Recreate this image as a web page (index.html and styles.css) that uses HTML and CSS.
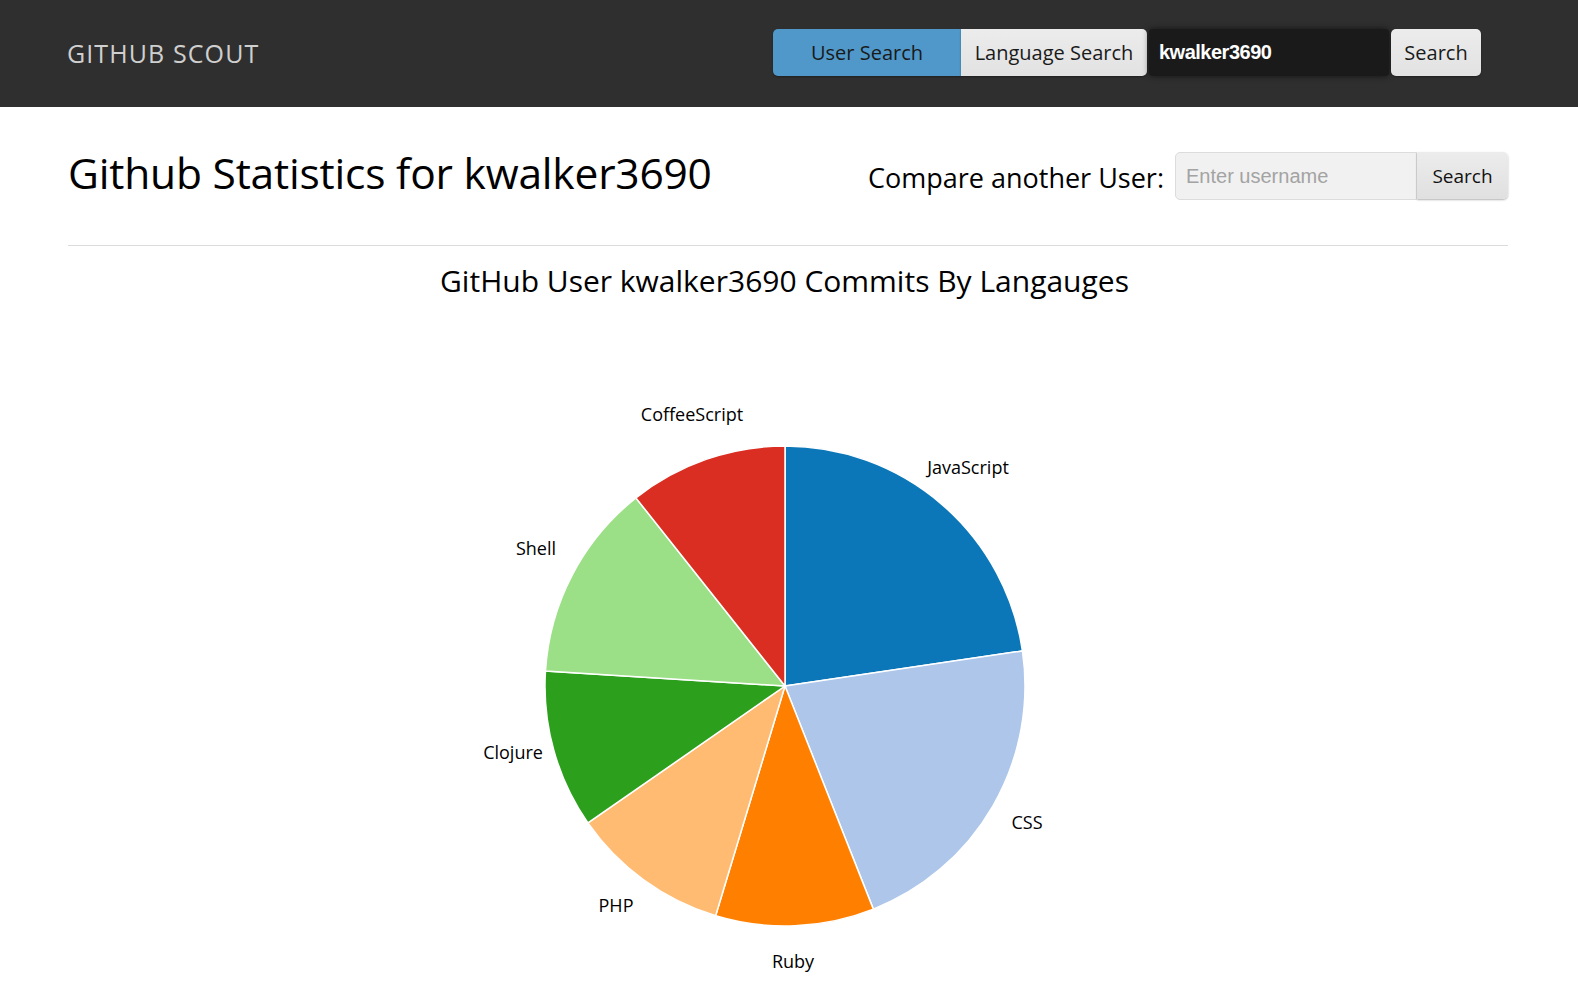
FILE: index.html
```html
<!DOCTYPE html>
<html>
<head>
<meta charset="utf-8">
<title>Github Scout</title>
<link rel="stylesheet" href="styles.css">
</head>
<body>
<header class="navbar">
  <div class="brand">GITHUB SCOUT</div>
  <div class="nav-controls">
    <div class="btn-group">
      <button class="nav-btn active">User Search</button>
      <button class="nav-btn lang">Language Search</button>
    </div>
    <input class="nav-input" type="text" value="kwalker3690">
    <button class="nav-btn search">Search</button>
  </div>
</header>
<main class="container">
  <div class="page-head">
    <h1 class="title">Github Statistics for kwalker3690</h1>
    <div class="compare">
      <span class="compare-label">Compare another User:</span>
      <input class="compare-input" type="text" placeholder="Enter username">
      <button class="compare-btn">Search</button>
    </div>
  </div>
  <hr class="divider">
  <h2 class="chart-title">GitHub User kwalker3690 Commits By Langauges</h2>
  <svg class="chart" width="800" height="700" viewBox="0 0 800 700">
    <g transform="translate(397,385)">
      <g class="slices">
        <path fill="#0b77b8" d="M0,0 L0,-240 A240,240 0 0,1 237.43,-35.06 Z"/>
        <path fill="#adc6ea" d="M0,0 L237.43,-35.06 A240,240 0 0,1 88.35,223.15 Z"/>
        <path fill="#ff8000" d="M0,0 L88.35,223.15 A240,240 0 0,1 -69.37,229.76 Z"/>
        <path fill="#ffbb72" d="M0,0 L-69.37,229.76 A240,240 0 0,1 -197.07,136.97 Z"/>
        <path fill="#2c9f1c" d="M0,0 L-197.07,136.97 A240,240 0 0,1 -239.53,-15.07 Z"/>
        <path fill="#9bdf86" d="M0,0 L-239.53,-15.07 A240,240 0 0,1 -149.07,-188.08 Z"/>
        <path fill="#d92e21" d="M0,0 L-149.07,-188.08 A240,240 0 0,1 0,-240 Z"/>
      </g>
      <g class="labels">
        <text x="183" y="-219">JavaScript</text>
        <text x="242" y="136">CSS</text>
        <text x="8" y="275">Ruby</text>
        <text x="-169" y="219">PHP</text>
        <text x="-272" y="66">Clojure</text>
        <text x="-249" y="-138">Shell</text>
        <text x="-93" y="-272">CoffeeScript</text>
      </g>
    </g>
  </svg>
</main>
</body>
</html>
```
FILE: styles.css
```css
html, body {
  margin: 0;
  padding: 0;
  background: #ffffff;
  font-family: "Open Sans", "Noto Sans", sans-serif;
  color: #111;
  overflow: hidden;
}

.navbar {
  height: 107px;
  background: #2f2f2f;
  display: flex;
  align-items: center;
  padding: 0 97px 0 67px;
  box-sizing: border-box;
}

.brand {
  font-size: 25px;
  letter-spacing: 1.1px;
  color: #cfcfcf;
  margin-top: -1px;
}

.nav-controls {
  margin-left: auto;
  display: flex;
  align-items: center;
  gap: 2px;
  margin-top: -3px;
}

.btn-group {
  display: flex;
}

.nav-btn {
  height: 47px;
  border: none;
  font-family: "Open Sans", sans-serif;
  font-size: 20px;
  color: #1a1a1a;
  background: linear-gradient(#ececec, #e2e2e2);
  box-shadow: 0 1px 2px rgba(0,0,0,0.35);
  padding: 0;
  cursor: pointer;
}

.nav-btn.active {
  width: 188px;
  background: #4f98c9;
  border-radius: 5px 0 0 5px;
}

.nav-btn.lang {
  width: 186px;
  border-radius: 0 5px 5px 0;
}

.nav-btn.search {
  width: 90px;
  border-radius: 5px;
}

.nav-input {
  width: 240px;
  height: 47px;
  box-sizing: border-box;
  background: #1a1a1a;
  border: none;
  border-radius: 4px;
  box-shadow: 0 0 6px rgba(0,0,0,0.6);
  color: #ffffff;
  font-family: "Liberation Sans", Arial, sans-serif;
  font-weight: bold;
  font-size: 20px;
  letter-spacing: -0.5px;
  padding: 0 10px;
  outline: none;
}

.container {
  padding: 0 70px 0 68px;
}

.page-head {
  display: flex;
  align-items: center;
  justify-content: space-between;
  height: 138px;
}

.title {
  margin: 0;
  font-weight: normal;
  font-size: 42.5px;
  letter-spacing: -0.2px;
  color: #000;
  margin-top: -7px;
}

.compare {
  display: flex;
  align-items: center;
}

.compare-label {
  font-size: 27px;
  color: #000;
  margin-right: 11px;
  margin-top: 2px;
}

.compare-input {
  width: 242px;
  height: 48px;
  box-sizing: border-box;
  background: #f1f1f1;
  border: 1px solid #dcdcdc;
  border-radius: 5px 0 0 5px;
  font-family: "Liberation Sans", Arial, sans-serif;
  font-size: 20px;
  padding: 0 10px;
  color: #333;
  outline: none;
}

.compare-input::placeholder {
  color: #a3a3a3;
}

.compare-btn {
  width: 91px;
  height: 47px;
  border: none;
  border-radius: 0 5px 5px 0;
  background: linear-gradient(#ececec, #e0e0e0);
  box-shadow: 0 1px 2px rgba(0,0,0,0.3);
  font-family: "Open Sans", sans-serif;
  font-size: 19px;
  color: #111;
  padding: 0;
  margin-top: -1px;
}

.divider {
  border: none;
  border-top: 1px solid #dcdcdc;
  margin: 0;
}

.chart-title {
  margin: 15px 7px 0 0;
  text-align: center;
  font-weight: normal;
  font-size: 30px;
  line-height: 40px;
  color: #000;
}

.chart {
  display: block;
  margin: 0 auto;
}

.slices path {
  stroke: #ffffff;
  stroke-width: 1.5;
}

.labels text {
  font-family: "Open Sans", sans-serif;
  font-size: 18px;
  fill: #000;
  text-anchor: middle;
  dominant-baseline: central;
}
```
